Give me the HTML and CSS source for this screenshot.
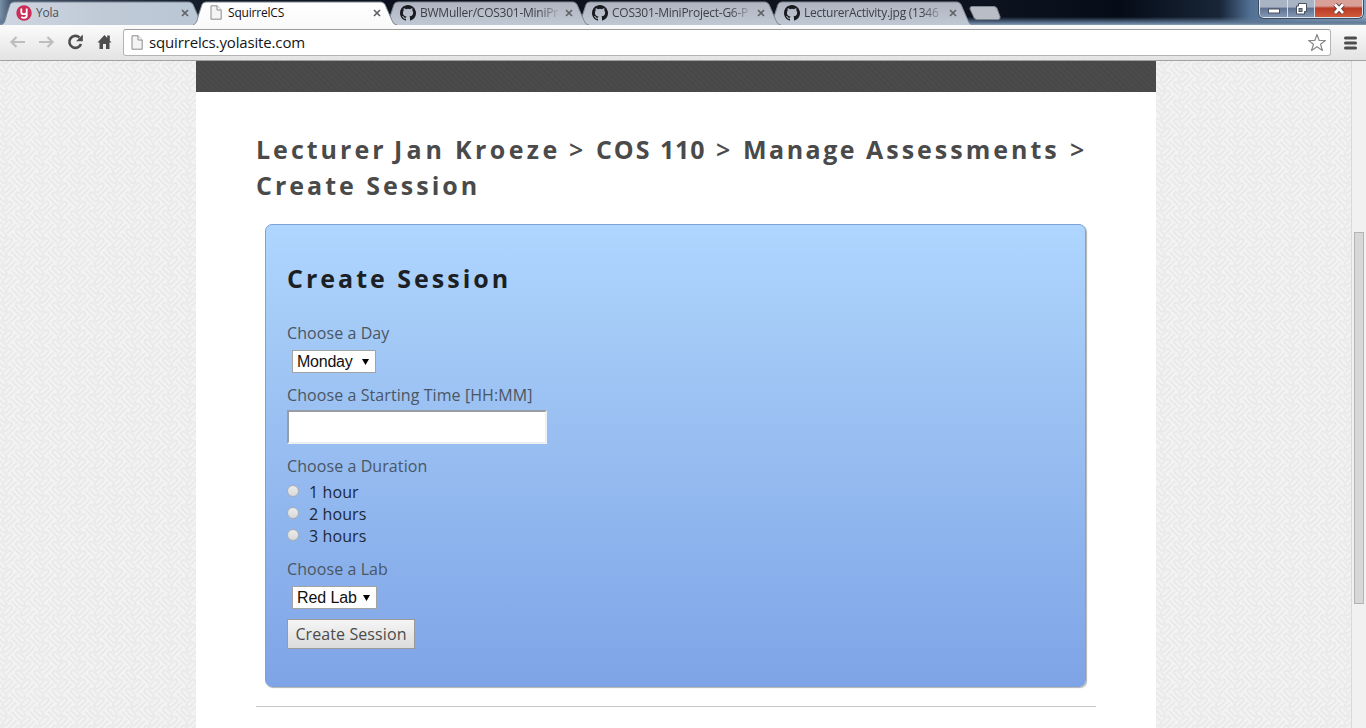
FILE: index.html
```
<!DOCTYPE html>
<html lang="en">
<head>
<meta charset="utf-8">
<title>SquirrelCS</title>
<link rel="stylesheet" href="styles.css">
</head>
<body>
<svg width="0" height="0" class="defs">
  <defs>
    <linearGradient id="tabfill" x1="0" y1="0" x2="0" y2="1"><stop offset="0" stop-color="#b0b5c0"/><stop offset="1" stop-color="#bfc8d4"/></linearGradient>
    <linearGradient id="tabfirst" x1="0" y1="0" x2="1" y2="0"><stop offset="0" stop-color="#ced6e1"/><stop offset=".5" stop-color="#c0cad7"/><stop offset="1" stop-color="#b9c6d4"/></linearGradient>
    <linearGradient id="tabactive" x1="0" y1="0" x2="0" y2="1"><stop offset="0" stop-color="#ffffff"/><stop offset="1" stop-color="#fafafa"/></linearGradient>
    <symbol id="page" viewBox="0 0 12 15"><path d="M1 .8h6.2L11.2 5v9.2H1z" fill="#f4f4f4" stroke="#8c8c8c"/><path d="M7 .8V5h4.2" fill="#fff" stroke="#8c8c8c"/></symbol>
    <symbol id="cross" viewBox="0 0 8 8"><path d="M1 1l6 6M7 1L1 7" stroke="#606266" stroke-width="1.7"/></symbol>
    <symbol id="github" viewBox="0 0 16 16"><path fill="#191b1e" d="M8 0C3.58 0 0 3.58 0 8c0 3.54 2.29 6.53 5.47 7.59.4.07.55-.17.55-.38 0-.19-.01-.82-.01-1.49-2.01.37-2.53-.49-2.69-.94-.09-.23-.48-.94-.82-1.13-.28-.15-.68-.52-.01-.53.63-.01 1.08.58 1.23.82.72 1.21 1.87.87 2.33.66.07-.52.28-.87.51-1.07-1.78-.2-3.64-.89-3.64-3.95 0-.87.31-1.59.82-2.15-.08-.2-.36-1.02.08-2.12 0 0 .67-.21 2.2.82a7.6 7.6 0 014 0c1.53-1.04 2.2-.82 2.2-.82.44 1.1.16 1.92.08 2.12.51.56.82 1.27.82 2.15 0 3.07-1.87 3.75-3.65 3.95.29.25.54.73.54 1.48 0 1.07-.01 1.93-.01 2.2 0 .21.15.46.55.38A8 8 0 008 0z"/></symbol>
    <symbol id="tabshape" viewBox="0 0 208 24"><path d="M0 24.5C4 23 4 20 6 13L9 4Q10 1.5 13 1.5H188Q190.500 1.500 192 4L199 20Q200 24 204 24.500" stroke="#7d8692"/></symbol>
  </defs>
</svg>
<div class="browser">
  <header class="titlebar">
    <div class="tabs">
      <div class="tab first"><svg class="shape"><use href="#tabshape" fill="url(#tabfirst)"/></svg>
        <svg class="icon" viewBox="0 0 16 16"><circle cx="8" cy="8" r="7.700" fill="#cb2d58"/><path d="M5.300 3.500v3.700q0 2 2.700 2t2.700-2V3.500M10.700 7v3.500q0 2.300-2.700 2.300-1.700 0-2.700-1" fill="none" stroke="#fff" stroke-width="1.800"/></svg>
        <span class="name">Yola</span><svg class="close"><use href="#cross"/></svg></div>
      <div class="tab active"><svg class="shape"><use href="#tabshape" fill="url(#tabactive)"/></svg>
        <svg class="icon doc"><use href="#page"/></svg><span class="name">SquirrelCS</span><svg class="close"><use href="#cross"/></svg></div>
      <div class="tab third"><svg class="shape"><use href="#tabshape" fill="url(#tabfill)"/></svg>
        <svg class="icon"><use href="#github"/></svg><span class="name fade">BWMuller/COS301-MiniPr</span><svg class="close"><use href="#cross"/></svg></div>
      <div class="tab fourth"><svg class="shape"><use href="#tabshape" fill="url(#tabfill)"/></svg>
        <svg class="icon"><use href="#github"/></svg><span class="name fade">COS301-MiniProject-G6-P</span><svg class="close"><use href="#cross"/></svg></div>
      <div class="tab"><svg class="shape"><use href="#tabshape" fill="url(#tabfill)"/></svg>
        <svg class="icon"><use href="#github"/></svg><span class="name fade">LecturerActivity.jpg (1346</span><svg class="close"><use href="#cross"/></svg></div>
      <svg class="newtab" width="32" height="16"><path d="M2.500 1.500H25q2 0 3 2l3 8q.5 3-2 3H8q-2 0-3-2L1 4q-.5-2 1.500-2.500z" fill="#b9bec6" stroke="#7f8791"/></svg>
    </div>
    <div class="winbtns">
      <span class="wb min"><svg width="14" height="8"><rect x="1.500" y="2" width="11" height="4" fill="#fff" stroke="#4a5260"/></svg></span>
      <span class="wb max"><svg width="14" height="14"><path d="M4.500 1.500h8v8h-2v2.500h-8V4h2z" fill="#fff" stroke="#4a5260"/><rect x="5" y="6.500" width="3" height="3" fill="#8794aa" stroke="#4a5260"/></svg></span>
      <span class="wb shut"><svg width="14" height="12" viewBox="0 0 14 12"><path d="M3 1.500L11 10M11 1.500L3 10" stroke="#5b3638" stroke-width="4.600"/><path d="M3 1.500L11 10M11 1.500L3 10" stroke="#fff" stroke-width="2.800"/></svg></span>
    </div>
  </header>
  <nav class="toolbar">
    <svg class="nav" width="110" height="20">
      <g fill="none" stroke="#bdbdbd" stroke-width="2.200"><path d="M19 10H6M10.500 5L5.500 10l5 5"/><path d="M33 10h13M41.500 5l5 5-5 5"/></g>
      <path d="M73.500 5.500A6 6 0 1 0 75 12" fill="none" stroke="#4d4d4d" stroke-width="2.600"/><path d="M76.800 2.500v6.700h-6.700z" fill="#4d4d4d"/>
      <path d="M91.500 10.500L98.500 3l2.700 2.900V3.500h2.600v5.200l1.700 1.800h-2V17H100v-5h-3v5h-3.500v-6.500z" fill="#4d4d4d"/>
    </svg>
    <div class="urlbar">
      <svg class="urlicon"><use href="#page"/></svg><span class="url">squirrelcs.yolasite.com</span>
      <svg class="star" width="20" height="20"><path d="M10 1.500l2.200 6h6.200l-4.900 3.700 1.900 6.300L10 13.800l-5.400 3.700 1.900-6.300L1.600 7.500h6.200z" fill="#fff" stroke="#888" stroke-width="1.200" stroke-linejoin="round"/></svg>
    </div>
    <svg class="menu" width="13" height="14"><path d="M1.500 2h10M1.500 7h10M1.500 12h10" stroke="#4d4d4d" stroke-width="3" stroke-linecap="round"/></svg>
  </nav>
  <div class="viewport">
    <svg class="weave" width="1351" height="667">
      <defs><pattern id="w" width="26" height="26" patternUnits="userSpaceOnUse" patternTransform="rotate(45)"><g fill="none" stroke="#e9e9ea" stroke-width="2" stroke-linecap="round">
        <rect x="1" y="1.500" width="11" height="4.500" rx="2.200"/><path d="M0 10h12"/>
        <rect x="14.500" y="1" width="4.500" height="11" rx="2.200"/><path d="M23 0v12"/>
        <rect x="1.500" y="14" width="4.500" height="11" rx="2.200"/><path d="M10 13v12"/>
        <rect x="14" y="14.500" width="11" height="4.500" rx="2.200"/><path d="M13 23h12"/>
      </g></pattern></defs>
      <rect width="1351" height="667" fill="#f3f3f3"/><rect width="1351" height="667" fill="url(#w)"/>
    </svg>
    <main class="sheet">
      <div class="band"></div>
      <div class="content">
        <h1 class="crumbs"><span class="w w1">Lecturer</span> <span class="w w2">Jan</span> <span class="w w3">Kroeze</span> <span class="w gt">&gt;</span> <span class="w w4">COS</span> <span class="w w5">110</span> <span class="w gt">&gt;</span> <span class="w w6">Manage</span> <span class="w w7">Assessments</span> <span class="w gt">&gt;</span> <span class="w8">Create Session</span></h1>
        <form class="card">
          <h2 class="cardtitle">Create Session</h2>
          <label class="label">Choose a Day</label>
          <div class="select day"><span class="value">Monday</span><svg width="7" height="6"><path d="M0 0h7L3.500 6z"/></svg></div>
          <label class="label second">Choose a Starting Time [HH:MM]</label>
          <input class="time" type="text">
          <label class="label third-label">Choose a Duration</label>
          <div class="radios">
            <div class="option"><i class="dot"></i>1 hour</div>
            <div class="option"><i class="dot"></i>2 hours</div>
            <div class="option"><i class="dot"></i>3 hours</div>
          </div>
          <label class="label fourth-label">Choose a Lab</label>
          <div class="select lab"><span class="value">Red Lab</span><svg width="7" height="6"><path d="M0 0h7L3.500 6z"/></svg></div>
          <button class="submit" type="button">Create Session</button>
        </form>
        <hr class="rule">
      </div>
    </main>
    <div class="scroll"><div class="thumb"></div></div>
  </div>
</div>
</body>
</html>
```
FILE: styles.css
```
* { box-sizing: border-box; }
body { margin: 0; overflow: hidden; background: #fff; font-family: "Open Sans", sans-serif; }
svg { display: block; flex: none; }
.defs { position: absolute; }
.browser { display: flex; flex-direction: column; width: 1366px; height: 728px; }

.titlebar { display: flex; justify-content: space-between; height: 25px; flex: none;
  background: linear-gradient(180deg, transparent 17px, #5f7895 23px, #8aa0b8 25px),
    linear-gradient(90deg, #7890a8 0, #45576d 10px, #141b29 200px, #0b111d 400px, #10151f 900px, #0c131f 1000px, #060c17 1120px, #182638 1220px, #506f92 1250px, #7695b5 1300px, #8aa4c0 1366px); }
.tabs { display: flex; isolation: isolate; }
.tab { position: relative; display: flex; width: 208px; height: 25px; margin-right: -16px; padding: 5px 0 0 15px; left: 1px; }
.shape { position: absolute; left: 0; top: 0; width: 208px; height: 25px; z-index: -1; }
.tab.first { z-index: 4; }
.tab.active { z-index: 5; }
.tab.third { z-index: 3; }
.tab.fourth { z-index: 2; }
.icon { width: 16px; height: 16px; }
.icon.doc { width: 12px; height: 15px; margin: 0 2px; }
.name { width: 142px; margin-left: 4px; white-space: nowrap; font: 12px/16px "Open Sans", sans-serif; letter-spacing: -.2px; color: #4b5059; }
.active .name { color: #111; }
.fade { letter-spacing: -.25px; color: #3d4148; -webkit-mask-image: linear-gradient(90deg, #000 118px, transparent 142px); mask-image: linear-gradient(90deg, #000 118px, transparent 142px); }
.close { width: 8px; height: 8px; margin: 4px 0 0 3px; }
.newtab { margin: 5px 0 0 9px; }
.winbtns { display: flex; width: 104px; height: 18px; margin-right: 3px; border: 1px solid #dbe4ee; border-top: 0; border-radius: 0 0 5px 5px; overflow: hidden; box-shadow: 0 0 0 1px #3d4c60; }
.wb { display: flex; justify-content: center; align-items: center; width: 28px; border-right: 1px solid #d5dde8; background: linear-gradient(#a8b3c4 0 40%, #5f7291 50%, #8198b5); }
.min { padding-top: 4px; }
.max { width: 27px; }
.shut { flex: 1; border: 0; background: linear-gradient(#d9a097 0 35%, #b93b25 48%, #d15a3b); }

.toolbar { display: flex; align-items: flex-start; height: 36px; flex: none; padding: 4px 0 0 6px; border-bottom: 1px solid #a1a1a1; background: linear-gradient(#fbfbfb, #e3e3e3); }
.nav { margin-top: 3px; }
.urlbar { display: flex; width: 1208px; height: 27px; margin-left: 7px; border: 1px solid #b4b4b4; border-top-color: #9c9c9c; border-radius: 3px; background: #fff; }
.urlicon { width: 12px; height: 15px; margin: 5px 0 0 7px; }
.url { flex: 1; margin-left: 6px; font: 15px/24px "Open Sans", sans-serif; color: #151515; letter-spacing: -.15px; }
.star { margin: 3px 3px 0 0; }
.menu { margin: 7px 0 0 13px; }

.viewport { position: relative; display: flex; height: 667px; overflow: hidden; isolation: isolate; }
.weave { position: absolute; left: 0; top: 0; z-index: -1; }
.sheet { width: 960px; height: 667px; margin-left: 196px; background: #fff; }
.band { height: 31px; background: repeating-linear-gradient(45deg, #484848 0 2px, #4b4b4b 2px 4px); }
.content { padding: 40px 60px 0; }
.crumbs { display: flex; flex-wrap: wrap; margin: -1px -20px 0 0; font: 700 25px/36px "Open Sans", sans-serif; letter-spacing: 3px; color: #4a4a4a; white-space: nowrap; }
.w { flex: none; }
.w1 { width: 138px; }
.w2 { width: 61px; letter-spacing: 4.1px; }
.w3 { width: 114px; letter-spacing: 3.400px; }
.gt { width: 27px; font-weight: 600; }
.w4 { width: 64px; letter-spacing: 1.900px; }
.w5 { width: 56px; letter-spacing: .8px; }
.w6 { width: 123px; letter-spacing: 2.500px; }
.w7 { width: 204px; letter-spacing: 3px; }
.w8 { width: 100%; }
.card { display: flex; flex-direction: column; align-items: flex-start; width: 821px; height: 463px; margin: 21px 0 0 9px; padding: 35px 21px 0; border: 1px solid #7ca2d9; border-radius: 7px; background: linear-gradient(#afd6ff, #a5cbf7 20%, #7ea4e7); box-shadow: 1px 1px 1px rgba(0,0,0,.3); }
.cardtitle { margin: 0 0 26px; font: 700 25px/36px "Open Sans", sans-serif; letter-spacing: 3px; color: #1c1f24; }
.label { font-size: 16px; line-height: 22px; letter-spacing: .08px; color: #4a5663; }
.select { display: flex; align-items: center; justify-content: space-between; height: 23px; margin: 6px 0 0 5px; padding: 0 6px 0 4px; border: 1px solid #a3a3a3; background: #fff; font: 16px/21px "Liberation Sans", sans-serif; letter-spacing: -.25px; color: #111; }
.value { white-space: nowrap; }
.day { width: 84px; }
.lab { width: 85px; letter-spacing: -.1px; }
.second { margin-top: 11px; }
.time { width: 260px; height: 34px; margin: 4px 0 0; border: 2px solid; border-color: #979da5 #edf0f4 #edf0f4 #979da5; background: #fff; }
.third-label { margin-top: 11px; }
.radios { margin-top: 4px; }
.option { display: flex; height: 22px; font-size: 16px; line-height: 22px; letter-spacing: .1px; color: #1d2836; }
.dot { width: 12px; height: 12px; margin: 4px 10px 0 0; border: 1px solid #a7adb5; border-radius: 50%; background: linear-gradient(#ececec, #d9d9d9); }
.fourth-label { margin-top: 11px; }
.submit { width: 128px; height: 30px; margin: 10px 0 0; padding: 0; border: 1px solid #9a9a9a; background: linear-gradient(#f5f5f5, #dcdcdc); font: 16px/22px "Open Sans", sans-serif; letter-spacing: .1px; color: #4b4b4b; white-space: nowrap; }
.rule { height: 1px; margin: 19px 0 0; border: 0; background: #c8c8c8; }
.scroll { width: 15px; margin-left: auto; padding: 171px 1px 0 2px; border-left: 1px solid #d9d9d9; background: #f1f1f1; }
.thumb { width: 10px; height: 372px; border: 1px solid #b4b4b4; background: #d7d7d7; }
```
